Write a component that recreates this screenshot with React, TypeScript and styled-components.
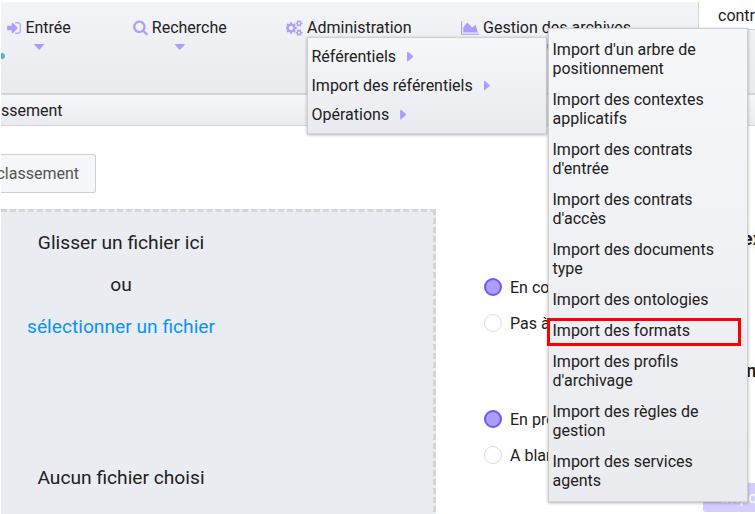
import React from "react";
import styled, { createGlobalStyle } from "styled-components";

const GlobalStyle = createGlobalStyle`
  * { box-sizing: border-box; }
  body {
    margin: 0;
    background: #fff;
    color: #212121;
    font: 16px/19px Roboto, "Liberation Sans", sans-serif;
  }
`;

const Page = styled.div`
  position: relative;
  display: flex;
  flex-direction: column;
  width: 755px;
  height: 514px;
  padding: 2px 0 0 1px;
  overflow: hidden;
`;

const Header = styled.header`
  display: flex;
  flex: none;
  height: 93px;
  border-bottom: 2px solid #d5d5d5;
  background: linear-gradient(#f3f4f7, #eaebef);
`;

const Nav = styled.nav`
  display: flex;
  flex: none;
  align-items: flex-start;
  width: 697px;
  padding: 16px 0 0 6.4px;
`;

const NavItem = styled.div<{ $gap: number }>`
  display: flex;
  flex: none;
  flex-direction: column;
  align-items: center;
  margin-right: ${(p) => p.$gap}px;
  white-space: nowrap;
`;

const NavLabel = styled.span`
  display: flex;
  align-items: center;
  gap: 4px;
`;

const Glyph = styled.svg`
  flex: none;
  height: 16px;
  fill: #ab9dfc;
`;

const CaretDown = styled.i`
  width: 10px;
  height: 6px;
  margin-top: 7px;
  background: #ab9dfc;
  clip-path: polygon(0 0, 100% 0, 100% 10%, 56% 90%, 44% 90%, 0 10%);
`;

const CaretRight = styled.i`
  width: 6px;
  height: 10px;
  margin-left: 11px;
  background: #ab9dfc;
  clip-path: polygon(0 0, 10% 0, 100% 44%, 100% 56%, 10% 100%, 0 100%);
`;

const StatusDot = styled.i`
  position: absolute;
  left: -2px;
  top: 53px;
  width: 7px;
  height: 6px;
  border-radius: 3px;
  background: #5eade0;
  clip-path: inset(0 0 0 3px);
`;

const Tenant = styled.div`
  flex: none;
  width: 57px;
  height: 28px;
  padding: 4px 0 0 19px;
  border: solid #d5d5d5;
  border-width: 0 0 1px 1px;
  background: #fff;
  overflow: hidden;
`;

const Breadcrumb = styled.div`
  flex: none;
  height: 31px;
  padding-top: 6px;
  border-bottom: 1px solid #d5d5d5;
  background: linear-gradient(#f6f7f9, #eaebef);
`;

const Tabs = styled.div`
  display: flex;
  flex: none;
  height: 83px;
  padding-top: 28px;
`;

const Tab = styled.div`
  display: flex;
  align-items: center;
  justify-content: flex-end;
  width: 95px;
  height: 39px;
  padding-right: 16px;
  border: 1px solid #d0d0d0;
  border-left: 0;
  border-radius: 0 3px 3px 0;
  background: #f5f7f9;
  color: #555;
`;

const Content = styled.main`
  display: flex;
  flex: 1;
`;

const DropZone = styled.section`
  flex: none;
  width: 435px;
  height: 330px;
  border: 3px dashed #d5d5d5;
  border-left: 0;
  background: #e9edf2;
`;

const DropText = styled.div`
  width: 240px;
  padding-top: 17px;
  font-size: 19.2px;
  line-height: 28px;
  text-align: center;
`;

const DropLine = styled.p<{ $link?: boolean; $space?: number }>`
  margin: 0 0 ${(p) => p.$space ?? 14}px;
  color: ${(p) => (p.$link ? "#0c93f5" : "inherit")};
`;

const Options = styled.section`
  display: flex;
  flex: none;
  flex-direction: column;
  width: 219px;
  padding: 69px 0 0 48px;
`;

const Choice = styled.div`
  display: flex;
  align-items: center;
  gap: 8px;
  height: 18px;
  margin-bottom: 18px;
  white-space: nowrap;
`;

const RadioDot = styled.i<{ $on?: boolean }>`
  flex: none;
  width: 18px;
  height: 18px;
  border: ${(p) => (p.$on ? "2px solid #7554f6" : "1px solid #dcdcdc")};
  border-radius: 50%;
  background: ${(p) => (p.$on ? "#ab9dfc" : "#fff")};
`;

const Group = styled.div`
  height: 132px;
`;

const Actions = styled.section`
  flex: none;
  display: flex;
  flex-direction: column;
  width: 160px;
  margin-left: 48px;
  white-space: nowrap;
`;

const Heading = styled.strong<{ $offset: number; $shift: number }>`
  display: block;
  height: 19px;
  margin-top: ${(p) => p.$offset}px;
  padding-left: ${(p) => p.$shift}px;
  font-size: 19.2px;
  font-weight: 700;
`;

const ImportButton = styled.button`
  width: 100px;
  height: 29px;
  margin-top: 103px;
  padding: 0 0 0 18px;
  border: 0;
  border-radius: 3px;
  background: #d5ccff;
  color: #fff;
  font: inherit;
  text-align: left;
`;

const Menu = styled.div`
  position: absolute;
  border: 1px solid #cfd0d2;
  background: linear-gradient(#f5f7f9, #eaebef);
  box-shadow: 0 1px 3px rgba(0, 0, 0, 0.3);
`;

const AdminMenu = styled(Menu)`
  left: 307px;
  top: 37px;
  width: 240px;
  height: 97px;
  padding: 4px 3.5px;
`;

const ImportMenu = styled(Menu)`
  left: 548px;
  top: 28px;
  width: 200px;
  height: 474px;
  padding: 5px 3.5px;
`;

const AdminEntry = styled.div`
  display: flex;
  align-items: center;
  height: 29px;
`;

const ImportEntry = styled.div`
  width: 175px;
  padding: 6px 0;
`;

const Highlight = styled.div`
  position: absolute;
  left: 547px;
  top: 318px;
  width: 194px;
  height: 28px;
  border: 3px solid #ff0000;
`;

const ICONS = {
  signIn: {
    box: "128 0 1536 1792",
    width: 14,
    d: "M1312 896q0 26-19 45l-544 544q-19 19-45 19t-45-19-19-45v-288h-448q-26 0-45-19t-19-45v-384q0-26 19-45t45-19h448v-288q0-26 19-45t45-19 45 19l544 544q19 19 19 45zm352-352v704q0 119-84.5 203.5t-203.5 84.5h-320q-13 0-22.5-9.5t-9.5-22.5q0-4-1-20t-.5-26.5 3-23.5 10-19.5 20.5-6.5h320q66 0 113-47t47-113v-704q0-66-47-113t-113-47h-312l-11.5-1-11.5-3-8-5.5-7-9-2-13.5q0-4-1-20t-.5-26.5 3-23.5 10-19.5 20.5-6.5h320q119 0 203.5 84.5t84.5 203.5z",
  },
  search: {
    box: "64 64 1664 1792",
    width: 15,
    d: "M1216 832q0-185-131.5-316.5t-316.5-131.5-316.5 131.5-131.5 316.5 131.5 316.5 316.5 131.5 316.5-131.5 131.5-316.5zm512 832q0 52-38 90t-90 38q-54 0-90-38l-343-342q-179 124-399 124-143 0-273.5-55.5t-225-150-150-225-55.5-273.5 55.5-273.5 150-225 225-150 273.5-55.5 273.5 55.5 225 150 150 225 55.5 273.5q0 220-124 399l343 343q37 37 37 90z",
  },
  cogs: {
    box: "0 0 1920 1792",
    width: 17,
    d: "M832 896q0-106-75-181t-181-75-181 75-75 181 75 181 181 75 181-75 75-181zm768 512q0-52-38-90t-90-38-90 38-38 90q0 53 37.5 90.5t90.5 37.5 90.5-37.5 37.5-90.5zm0-1024q0-52-38-90t-90-38-90 38-38 90q0 53 37.5 90.5t90.5 37.5 90.5-37.5 37.5-90.5zm-384 421v185q0 10-7 19.5t-16 10.5l-155 24q-11 35-32 76 34 48 90 115 7 11 7 20 0 12-7 19-23 30-82.5 89.5t-78.5 59.5q-11 0-21-7l-115-90q-37 19-77 31-11 108-23 155-7 24-30 24h-186q-11 0-20-7.5t-10-17.5l-23-153q-34-10-75-31l-118 89q-7 7-20 7-11 0-21-8-144-133-144-160 0-9 7-19 10-14 41-53t47-61q-23-44-35-82l-152-24q-10-1-17-9.5t-7-19.5v-185q0-10 7-19.5t16-10.5l155-24q11-35 32-76-34-48-90-115-7-11-7-20 0-12 7-20 22-30 82-89t79-59q11 0 21 7l115 90q34-18 77-32 11-108 23-154 7-24 30-24h186q11 0 20 7.5t10 17.5l23 153q34 10 75 31l118-89q8-7 20-7 11 0 21 8 144 133 144 160 0 8-7 19-12 16-42 54t-45 60q23 48 34 82l152 23q10 2 17 10.5t7 19.5zm640 533v140q0 16-149 31-12 27-30 52 51 113 51 138 0 4-4 7-122 71-124 71-8 0-46-47t-52-68q-20 2-30 2t-30-2q-14 21-52 68t-46 47q-2 0-124-71-4-3-4-7 0-25 51-138-18-25-30-52-149-15-149-31v-140q0-16 149-31 13-29 30-52-51-113-51-138 0-4 4-7 4-2 35-20t59-34 30-16q8 0 46 46.5t52 67.5q20-2 30-2t30 2q51-71 92-112l6-2q4 0 124 70 4 3 4 7 0 25-51 138 17 23 30 52 149 15 149 31zm0-1024v140q0 16-149 31-12 27-30 52 51 113 51 138 0 4-4 7-122 71-124 71-8 0-46-47t-52-68q-20 2-30 2t-30-2q-14 21-52 68t-46 47q-2 0-124-71-4-3-4-7 0-25 51-138-18-25-30-52-149-15-149-31v-140q0-16 149-31 13-29 30-52-51-113-51-138 0-4 4-7 4-2 35-20t59-34 30-16q8 0 46 46.5t52 67.5q20-2 30-2t30 2q51-71 92-112l6-2q4 0 124 70 4 3 4 7 0 25-51 138 17 23 30 52 149 15 149 31z",
  },
  area: {
    box: "0 0 2048 1792",
    width: 18,
    d: "M2048 1536v128h-2048v-1536h128v1408h1920zm-384-1024l256 896h-1664v-576l448-576 576 576z",
  },
};

const Icon = ({ name }: { name: keyof typeof ICONS }) => (
  <Glyph viewBox={ICONS[name].box} width={ICONS[name].width} aria-hidden>
    <path d={ICONS[name].d} />
  </Glyph>
);

const NAV: { icon: keyof typeof ICONS; label: string; gap: number }[] = [
  { icon: "signIn", label: "Entrée", gap: 62 },
  { icon: "search", label: "Recherche", gap: 59.3 },
  { icon: "cogs", label: "Administration", gap: 49.5 },
  { icon: "area", label: "Gestion des archives", gap: 0 },
];

const ADMIN = ["Référentiels", "Import des référentiels", "Opérations"];

const IMPORTS = [
  "Import d'un arbre de positionnement",
  "Import des contextes applicatifs",
  "Import des contrats d'entrée",
  "Import des contrats d'accès",
  "Import des documents type",
  "Import des ontologies",
  "Import des formats",
  "Import des profils d'archivage",
  "Import des règles de gestion",
  "Import des services agents",
];

const Radio = ({ label, on }: { label: string; on?: boolean }) => (
  <Choice>
    <RadioDot $on={on} />
    {label}
  </Choice>
);

export default function App() {
  return (
    <Page>
      <GlobalStyle />
      <Header>
        <Nav>
          {NAV.map((n) => (
            <NavItem key={n.label} $gap={n.gap}>
              <NavLabel>
                <Icon name={n.icon} />
                {n.label}
              </NavLabel>
              <CaretDown />
            </NavItem>
          ))}
        </Nav>
        <Tenant>contr</Tenant>
      </Header>
      <StatusDot />
      <Breadcrumb>ssement</Breadcrumb>
      <Tabs>
        <Tab>classement</Tab>
      </Tabs>
      <Content>
        <DropZone>
          <DropText>
            <DropLine>Glisser un fichier ici</DropLine>
            <DropLine>ou</DropLine>
            <DropLine $link $space={123}>sélectionner un fichier</DropLine>
            <DropLine>Aucun fichier choisi</DropLine>
          </DropText>
        </DropZone>
        <Options>
          <Group>
            <Radio label="En co" on />
            <Radio label="Pas à" />
          </Group>
          <Group>
            <Radio label="En pro" on />
            <Radio label="A blan" />
          </Group>
        </Options>
        <Actions>
          <Heading $offset={20} $shift={26}>d'ex</Heading>
          <Heading $offset={113} $shift={43}>n</Heading>
          <ImportButton>Impo</ImportButton>
        </Actions>
      </Content>
      <AdminMenu>
        {ADMIN.map((label) => (
          <AdminEntry key={label}>
            {label}
            <CaretRight />
          </AdminEntry>
        ))}
      </AdminMenu>
      <ImportMenu>
        {IMPORTS.map((label) => (
          <ImportEntry key={label}>{label}</ImportEntry>
        ))}
      </ImportMenu>
      <Highlight />
    </Page>
  );
}
